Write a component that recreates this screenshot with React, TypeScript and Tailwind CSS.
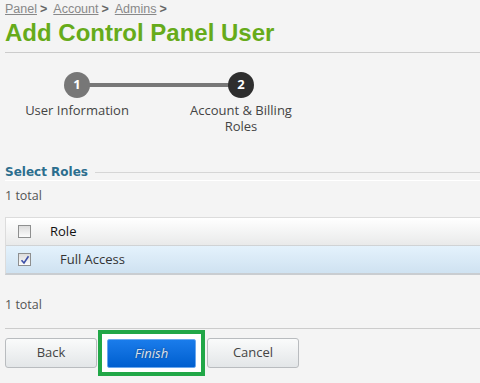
import React from 'react';

const Checkbox: React.FC<{ checked?: boolean }> = ({ checked }) => (
  <span className="flex h-[13px] w-[13px] items-center justify-center border border-[#8e8f8f] bg-gradient-to-b from-[#dcdcdc] to-[#fbfbfb]">
    {checked && (
      <svg width="10" height="10" viewBox="0 0 10 10">
        <path d="M1.5 5.2 L4 8 L8.5 1.2" fill="none" stroke="#3c4fa8" strokeWidth="1.6" />
      </svg>
    )}
  </span>
);

const Step: React.FC<{ n: number; active?: boolean; label: React.ReactNode }> = ({ n, active, label }) => (
  <div className="flex w-[140px] flex-col items-center">
    <div
      className={`z-10 flex h-[26px] w-[26px] items-center justify-center rounded-full text-[13px] font-bold text-white ${
        active ? 'bg-[#2e2e2e]' : 'bg-[#777777]'
      }`}
    >
      {n}
    </div>
    <div className="mt-[4px] text-center text-[13px] leading-[16px] text-[#444]">{label}</div>
  </div>
);

export default function App() {
  return (
    <div className="h-[383px] w-[480px] overflow-hidden bg-[#f4f4f4] font-['Liberation_Sans',sans-serif]">
      <div className="pl-[5px] pt-[2px]">
        <div className="flex h-[14px] items-center text-[12.5px] leading-[14px] text-[#888]">
          <a className="underline">Panel</a>
          <span className="ml-[3px] mr-[6px] font-bold text-[#666]">&gt;</span>
          <a className="underline">Account</a>
          <span className="ml-[3px] mr-[6px] font-bold text-[#666]">&gt;</span>
          <a className="underline">Admins</a>
          <span className="ml-[3px] font-bold text-[#666]">&gt;</span>
        </div>
        <h1 className="mt-[3px] h-[28px] text-[24px] font-bold leading-[28px] text-[#66ab1a]">Add Control Panel User</h1>
        <div className="mt-[5px] border-t border-[#cccccc]" />

        {/* wizard steps */}
        <div className="relative ml-[2px] mt-[19px] flex gap-[24px] font-['Open_Sans',sans-serif]">
          <div className="absolute left-[70px] top-[11px] h-[4px] w-[164px] bg-[#777777]" />
          <Step n={1} label="User Information" />
          <Step n={2} active label={<>Account &amp; Billing<br />Roles</>} />
        </div>

        {/* select roles */}
        <div className="mt-[30px] flex h-[16px] items-center">
          <span className="text-[12px] font-bold leading-[16px] text-[#2c6e8e] font-['DejaVu_Sans',sans-serif]">Select Roles</span>
          <div className="ml-[7px] flex-1 border-t border-[#d6d6d6]" />
        </div>
        <div className="border-t border-white" />
        <div className="mt-[7px] h-[16px] text-[12.5px] leading-[16px] text-[#555] font-['Open_Sans',sans-serif]">1 total</div>

        <div className="mt-[13px] border-t border-b-2 border-l border-t-[#dcdcdc] border-b-[#c9cdd1] border-l-[#dcdcdc] font-['Open_Sans',sans-serif] text-[13px]">
          <div className="flex h-[28px] items-center border-b border-[#d0d3d5] bg-gradient-to-b from-[#ffffff] to-[#e9eaea]">
            <div className="w-[44px] pl-[12px]"><Checkbox /></div>
            <span className="text-[#111]">Role</span>
          </div>
          <div className="flex h-[27px] items-center bg-gradient-to-b from-[#e4f2fc] to-[#cfe2f1]">
            <div className="w-[54px] pl-[12px]"><Checkbox checked /></div>
            <span className="text-[#333]">Full Access</span>
          </div>
        </div>

        <div className="mt-[22px] h-[16px] text-[12.5px] leading-[16px] text-[#555] font-['Open_Sans',sans-serif]">1 total</div>
        <div className="mt-[15px] border-t border-[#cccccc]" />

        {/* buttons */}
        <div className="mt-[1px] flex items-center font-['Open_Sans',sans-serif] text-[13px]">
          <button className="h-[30px] w-[92px] rounded-[3px] border border-[#b9bcbf] bg-gradient-to-b from-[#fafbfb] to-[#e3e6e8] text-[#444]">
            Back
          </button>
          <div className="ml-[1px] border-[4px] border-[#21a747] bg-white px-[5px] pb-[4px] pt-[5px]">
            <button className="block h-[29px] w-[89px] rounded-[2px] border border-[#6aa8ee] bg-gradient-to-b from-[#1a7ceb] to-[#005fcf] italic text-[#dbe3ef] [text-shadow:0_0_2px_#1d3b66]">
              Finish
            </button>
          </div>
          <button className="ml-[2px] h-[30px] w-[92px] rounded-[3px] border border-[#b9bcbf] bg-gradient-to-b from-[#fafbfb] to-[#e3e6e8] text-[#444]">
            Cancel
          </button>
        </div>
      </div>
    </div>
  );
}
